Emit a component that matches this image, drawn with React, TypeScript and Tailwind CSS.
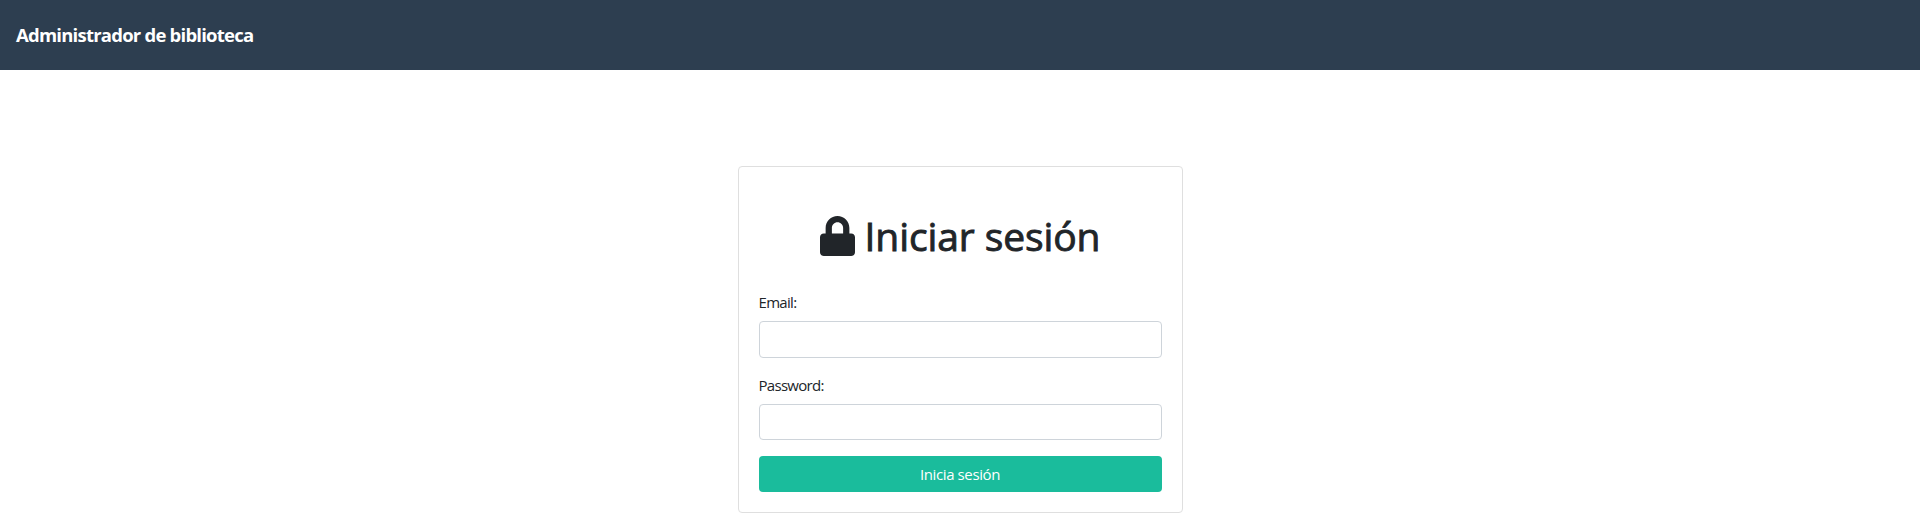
import React from "react";
import { FaLock } from "react-icons/fa";

function Field({ id, label, type, inputClass }: { id: string; label: string; type: string; inputClass: string }) {
  return (
    <div className="mb-4 flex flex-col">
      <label htmlFor={id} className="mb-2 h-[22px] text-[15px] leading-[22px] tracking-[-0.7px]">
        {label}
      </label>
      <input id={id} type={type} className={`w-full rounded border border-[#ced4da] bg-white px-3 outline-none ${inputClass}`} />
    </div>
  );
}

export default function App() {
  return (
    <div className="min-h-[518px] bg-white font-['Open_Sans','Noto_Sans',sans-serif] text-[#212529]">
      <header className="flex h-[70px] items-center bg-[#2d3e50] px-4">
        <a className="text-[18.5px] leading-[30px] font-bold tracking-[-0.77px] whitespace-nowrap text-white">Administrador de biblioteca</a>
      </header>
      <main className="flex justify-center pt-24">
        <form className="h-[347px] w-[445px] rounded border border-[#dfdfdf] px-5 pt-[45px]" onSubmit={(e) => e.preventDefault()}>
          <h1 className="mb-[31px] flex h-12 items-center justify-center gap-[10px] text-[39px] leading-[48px] whitespace-nowrap">
            <FaLock className="h-10 w-[35px]" />
            <span className="font-normal tracking-[-0.1px] [-webkit-text-stroke:0.9px_#212529]">Iniciar sesión</span>
          </h1>
          <Field id="email" label="Email:" type="email" inputClass="h-[37px]" />
          <Field id="password" label="Password:" type="password" inputClass="h-9" />
          <button type="submit" className="block h-9 w-full rounded bg-[#1abc9c] text-[15px] leading-6 tracking-[-0.4px] text-white">
            Inicia sesión
          </button>
        </form>
      </main>
    </div>
  );
}
